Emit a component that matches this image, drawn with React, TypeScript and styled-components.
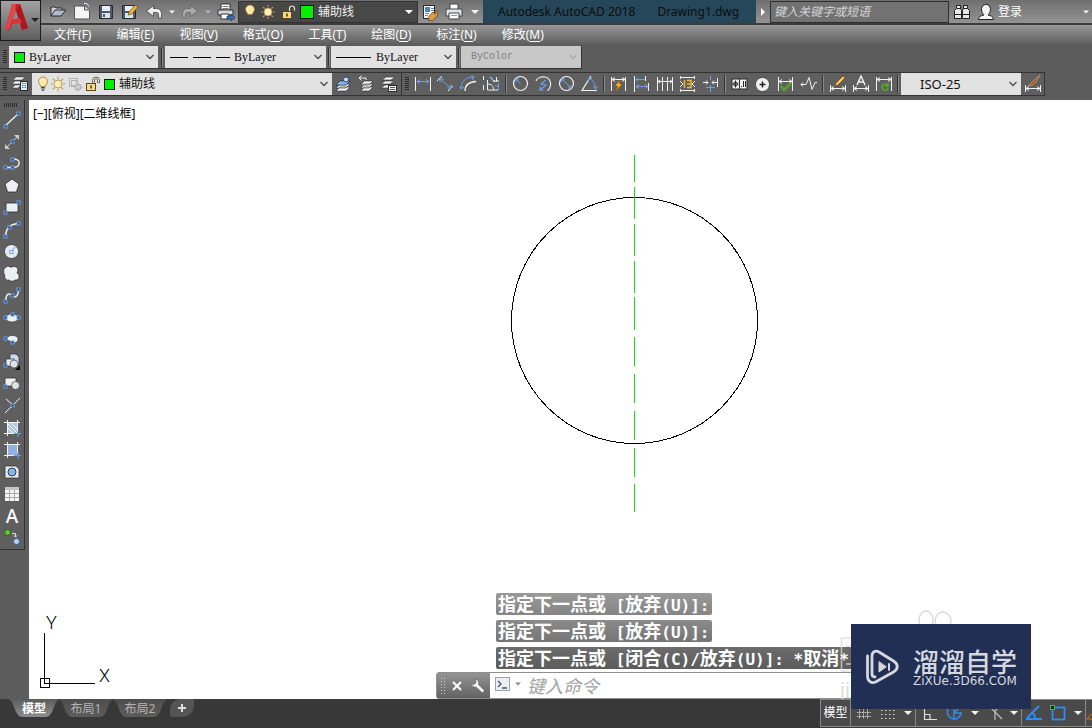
import React from "react";
import styled, { createGlobalStyle } from "styled-components";

const GlobalStyle = createGlobalStyle`
  *, *::before, *::after { box-sizing: border-box; }
  body { margin: 0; background: #5c5c5c; }
  button, input, select { font: inherit; color: inherit; margin: 0; padding: 0; border: 0; background: none; }
  svg { display: block; flex: none; }
`;

const W = "#f2f2f2";
const B = "#6aa2ee";
const K = "#2b2b2b";

/* ---------- shared glyphs ---------- */

const Bulb = () => (
  <svg width="12" height="16" viewBox="0 0 12 16">
    <path d="M6 1a4.5 4.5 0 0 0-4.5 4.5c0 2 1.8 3 2.2 5h4.6c.4-2 2.2-3 2.2-5A4.500 4.500 0 0 0 6 1z" fill="#ffe9a3" stroke="#8a6d2c" strokeWidth=".7" />
    <path d="M4.500 3.500a2.500 2.500 0 0 0-1 2.500" stroke="#fff" fill="none" />
    <path d="M4 11.500h4M4 13h4M5 14.500h2" stroke="#57534a" />
  </svg>
);

const Sun = () => (
  <svg width="16" height="16" viewBox="0 0 16 16">
    <path d="M8 1v2M8 13v2M1 8h2M13 8h2M3 3l1.500 1.500M11.500 11.500L13 13M13 3l-1.500 1.500M4.500 11.500L3 13" stroke="#b89c5c" strokeWidth="1.200" />
    <circle cx="8" cy="8" r="4" fill="#fff0b8" stroke="#a88a48" strokeWidth=".8" />
  </svg>
);

const FreezeViewport = () => (
  <svg width="16" height="16" viewBox="0 0 16 16" fill="none" stroke="#b4b4b4">
    <path d="M2 2.500h8.500M2.500 2v8.500h5M10.500 2v4" />
    <rect x="4.500" y="4.500" width="5" height="5" />
    <circle cx="11" cy="11" r="2.800" strokeWidth="1.500" fill="#d0d0d0" />
    <path d="M11 6.500v9M6.500 11h9" strokeDasharray="1 7" strokeWidth="1.500" />
  </svg>
);

const OpenLock = () => (
  <svg width="16" height="16" viewBox="0 0 16 16">
    <path d="M9.500 8V4.500a2.500 2.500 0 0 1 5 0V7" fill="none" stroke="#4a4436" strokeWidth="2.600" />
    <path d="M9.500 8V4.500a2.500 2.500 0 0 1 5 0V6.500" fill="none" stroke="#e8e3d6" strokeWidth="1.200" />
    <rect x="2.500" y="7.500" width="9" height="7" fill="#f6d98a" stroke="#57451c" />
    <path d="M7 9.500v3" stroke="#3d3215" strokeWidth="1.500" />
  </svg>
);

const Caret = ({ fill = W, w = 8 }: { fill?: string; w?: number }) => (
  <svg width={w} height="6" viewBox="0 0 8 6"><path d="M0 1h8L4 5z" fill={fill} /></svg>
);

const ChevronMark = styled.svg<{ $faint?: boolean }>`
  margin-left: -12px;
  margin-right: 4px;
  pointer-events: none;
  fill: none;
  stroke: ${(p) => (p.$faint ? "#a8a8a8" : "#4a4a4a")};
`;

const Chevron = ({ faint }: { faint?: boolean }) => (
  <ChevronMark $faint={faint} width="8" height="6" viewBox="0 0 8 6"><path d="M.5 1l3.500 3.500L7.500 1" strokeWidth="1.300" /></ChevronMark>
);

/* ---------- toolbar icons ---------- */

const ends = (x: number, y: number) => (
  <rect key={`${x}-${y}`} x={x - 1.5} y={y - 1.5} width="3" height="3" fill="#34435c" stroke={B} />
);

const dimTicks = <path d="M4.500 12v7M19.500 12v7M5 15.500h14M8 13.500l-3 2 3 2M16 13.500l3 2-3 2" stroke={W} fill="none" />;

const layerStack = (
  <path d="M8 4h9l-4 3H4zM7 8h9l-4 3H3zM7 12h9l-4 3H3z" fill={W} stroke={K} strokeWidth=".6" />
);

const icons: Record<string, React.ReactNode> = {
  /* quick access bar, 24 x 22 */
  open: (<>
    <path d="M5 15V6h4l1 1h6v2" fill="#cfd3d8" stroke={K} />
    <path d="M5 15l4-6h11l-5 6z" fill="#aebccb" stroke={K} />
  </>),
  newFile: (<>
    <path d="M4.500 5h10l5 4v9h-15z" fill="#f4f4f4" stroke="#555" />
    <path d="M14.500 5v4h5" fill="#d0d0d0" stroke="#555" />
    <path d="M14 2.500h3l2 3" fill="none" stroke="#dfe9f6" />
  </>),
  save: (<>
    <path d="M5.500 4.500h13v13h-13z" fill="#4b5a6c" stroke={K} />
    <rect x="8" y="5" width="8" height="5" fill="#e8eef4" />
    <rect x="8" y="12" width="8" height="5" fill="#dde4ec" />
    <path d="M10 13v3" stroke={K} strokeWidth="1.500" />
  </>),
  saveAs: (<>
    <path d="M4.500 4.500h13v13h-13z" fill="#4b5a6c" stroke={K} />
    <rect x="7" y="5" width="8" height="5" fill="#e8eef4" />
    <rect x="7" y="12" width="8" height="5" fill="#dde4ec" />
    <path d="M10 14l1-3 6-7 3 2-6 7z" fill="#f0b23a" stroke="#6b4a13" strokeWidth=".7" />
  </>),
  undo: <path d="M4.500 10l7-5.500v3h3c3 0 5 2 5 5V17h-3v-3c0-2-1-2.500-2-2.500h-3v4z" fill="#eee" stroke="#444" strokeWidth=".8" />,
  redo: <path d="M19.500 10l-7-5.500v3h-3c-3 0-5 2-5 5V17h3v-3c0-2 1-2.500 2-2.500h3v4z" fill="#a9a9a9" stroke="#666" strokeWidth=".8" />,
  plot: (<>
    <path d="M7 3h9v6H7z" fill="#fff" stroke="#333" />
    <path d="M8.500 5.500h6M8.500 7.500h6" stroke="#777" />
    <path d="M4 9h15v5H4z" fill="#d4d8dc" stroke="#333" />
    <path d="M7 13h8v5H7z" fill="#fff" stroke="#333" />
    <path d="M13 15h4v-2l4 3.500-4 3.500v-2h-4z" fill="#3d6fb5" stroke="#18304f" strokeWidth=".7" />
  </>),
  preview: (<>
    <rect x="5.500" y="4.500" width="11" height="13" fill="#f4f6f8" stroke={K} />
    <rect x="7" y="6" width="5" height="5" fill="#4a83c8" />
    <path d="M13 7.500h3M13 9.500h3M7 12.500h4M7 14.500h3" stroke="#7888a0" />
    <path d="M11 15l4-4 2 2 2-4 1 1-1 5-4 5-5-1z" fill="#dd9a48" stroke="#69401a" strokeWidth=".7" />
  </>),
  printer: (<>
    <path d="M8 3h8v6H8z" fill="#fff" stroke="#444" />
    <path d="M4 8h16v7H4z" fill="#e2e5e8" stroke="#444" />
    <path d="M7 12h10v6H7z" fill="#fff" stroke="#444" />
    <path d="M9 14.500h6" stroke="#6a9add" />
  </>),
  /* layers and dimension bars, 23 x 22 */
  layerProps: (<>
    <path d="M7 4h9l-3 3H4zM6 8h9l-3 3H3zM6 12h6l-3 3H3z" fill={W} stroke={K} strokeWidth=".5" />
    <rect x="11.500" y="8.500" width="7" height="9" fill="#dfe8f5" stroke={K} />
    <path d="M13 10.500h4M13 12.500h4M13 14.500h4" stroke="#4477bb" strokeDasharray="1 .5" />
  </>),
  layerCurrent: (<>
    <path d="M8 8h10l-4 4H4zM8 11h10l-4 4H4zM8 14h10l-4 4H4z" fill={W} stroke={K} strokeWidth=".6" />
    <path d="M8 8h10l-4 4H4z" fill="#84b4ee" stroke={K} strokeWidth=".6" />
    <circle cx="14" cy="6.500" r="2.500" fill="#cfe3ff" stroke="#244a80" />
  </>),
  layerPrev: (<>
    <path d="M4 5h7M6.500 2.500L4 5l2.500 2.500M11 5v2" fill="none" stroke={W} />
    <path d="M9 8h9l-4 4H6zM9 11h9l-4 4H6zM9 14h9l-4 4H6z" fill={W} stroke={K} strokeWidth=".6" />
  </>),
  layerState: (<>
    {layerStack}
    <rect x="10.500" y="12.500" width="8" height="6" fill={W} stroke={K} />
    <path d="M12 14.500h5M12 16.500h5" stroke="#555" />
  </>),
  dimLinear: (<>
    <path d="M4.500 4v14M19.500 4v14" stroke={W} />
    <path d="M6 8.500h12M9 6.500l-3 2 3 2M15 6.500l3 2-3 2" stroke={B} fill="none" />
  </>),
  dimAligned: (<>
    <path d="M3 8l5-5M14 18l5-5" stroke={W} />
    <path d="M6 6l11 9M6 9.500V6h4M17 11.500V15h-4" stroke={B} fill="none" />
  </>),
  dimArc: (<>
    <path d="M8 18C8 12 12 9 19 8.500" stroke={W} fill="none" strokeWidth="1.300" />
    <path d="M4 16C4 8 9 4 17 4M3 13l1 3 3-2M14 2.500L17 4l-2 3" stroke={B} fill="none" />
  </>),
  dimOrdinate: (<>
    <path d="M7.500 7v10H18M7.500 11c4 0 6 2 6 6M13 8h6" stroke={W} fill="none" />
    <path d="M3.500 3v4M3.500 12v5M16.500 4v5M11 5l4 4" stroke={W} />
    <path d="M9 4.500h3v3M15 13h4M18.500 10v7" stroke={B} fill="none" />
  </>),
  dimRadius: (<>
    <circle cx="11.500" cy="10.500" r="7" fill="none" stroke={W} strokeWidth="1.200" />
    <path d="M11.500 10.500L7 6M7 9V6h3" stroke={B} fill="none" />
  </>),
  dimJogged: (<>
    <path d="M4 8c1-3 5-4.500 9-4s6 4.500 5.500 8.500-2 4-3 5" fill="none" stroke={W} strokeWidth="1.200" />
    <path d="M14 7l-5 4 5 1-6 5M8 13.500V17h3.500" stroke={B} fill="none" strokeWidth="1.200" />
  </>),
  dimDiameter: (<>
    <circle cx="11.500" cy="10.500" r="7" fill="none" stroke={W} strokeWidth="1.200" />
    <path d="M7 6l9 9M7 9V6h3M16 12v3h-3" stroke={B} fill="none" />
  </>),
  dimAngular: (<>
    <path d="M13 3L4 17.500h15" stroke={W} fill="none" strokeWidth="1.200" />
    <path d="M11 5.500c4 1.500 6.500 5 6.500 10M10.500 9V5.500H14M15 13l2.500 3 2.500-3" stroke={B} fill="none" />
  </>),
  dimQuick: (<>
    <path d="M4.500 4v14M18.500 4v14M5 6.500h13M8 4.500l-3 2 3 2M15 4.500l3 2-3 2" stroke={W} fill="none" />
    <path d="M13 7l-5 6h3l-2 5 6-7h-3z" fill="#ffb52e" stroke="#a35c00" strokeWidth=".5" />
  </>),
  dimBaseline: (<>
    <path d="M4.500 3v16M18.500 10v8M15.500 3v5" stroke={W} />
    <path d="M6 6.500h9M8 4.500l-2 2 2 2M6 13.500h12M9 11.500l-3 2 3 2M15 11.500l3 2-3 2" stroke={B} fill="none" />
  </>),
  dimContinue: (
    <path d="M4.500 4v14M9.500 4v14M14.500 4v14M19.500 4v14M5 8.500h14M7 7l-2 1.500L7 10M17 7l2 1.500-2 1.500" stroke={W} fill="none" />
  ),
  dimSpace: (<>
    <path d="M4 4.500h15M4 17.500h15M4.500 3v3M18.500 3v3M4.500 16v3M18.500 16v3M4 8l3 3-3 3M19 8l-3 3 3 3" stroke={W} fill="none" />
    <path d="M11 7.500h4v7h-4M11 11h4M8.500 7v8" stroke="#f5b731" fill="none" strokeWidth="1.500" />
  </>),
  dimBreak: (<>
    <path d="M4 9.500h5M13 9.500h6M18.500 5v9M7 7.500l2 2-2 2M15 7.500l-2 2 2 2" stroke={W} fill="none" />
    <path d="M11.500 3v4M11.500 12v7M7 14.500h9" stroke={B} />
  </>),
  tolerance: (<>
    <rect x="4" y="6" width="15" height="10" fill={W} stroke={K} />
    <path d="M11.500 6v10M15.500 8v6M17.500 8v6M13 13.500h1" stroke={K} fill="none" />
    <circle cx="7.500" cy="11" r="2" fill="none" stroke={K} />
    <path d="M7.500 7.500v7M4.500 11h6" stroke={K} />
  </>),
  centerMark: (<>
    <circle cx="11.500" cy="11.500" r="7" fill={W} stroke={K} strokeWidth=".7" />
    <path d="M11.500 8.500v6M8.500 11.500h6" stroke="#222" strokeWidth="1.500" />
  </>),
  inspect: (<>
    <path d="M4.500 4v14M18.500 4v14M5 8.500h13M8 6.500l-3 2 3 2M15 6.500l3 2-3 2" stroke={W} fill="none" />
    <path d="M7 13l3 4 7-7" stroke="#57a329" strokeWidth="2.500" fill="none" />
  </>),
  jogLine: <path d="M4 11.500h5l3-7 3 12 3-7h2M6 9.500l-2 2 2 2" stroke={W} fill="none" />,
  dimEdit: (<>
    {dimTicks}
    <path d="M9 13l1-3 7-7 2 2-7 7z" fill="#ffc655" stroke="#6f4712" strokeWidth=".7" />
  </>),
  dimTextEdit: (<>
    {dimTicks}
    <path d="M8 12l4-9 4 9M9.500 9h5" stroke={W} fill="none" strokeWidth="1.500" />
  </>),
  dimUpdate: (<>
    <path d="M4.500 4v14M19.500 4v14M5 6.500h14M8 4.500l-3 2 3 2M16 4.500l3 2-3 2" stroke={W} fill="none" />
    <path d="M15 12a3 3 0 1 0 1 3M16 10v3h-3" stroke="#57a329" strokeWidth="1.800" fill="none" />
  </>),
  dimStyle: (<>
    {dimTicks}
    <path d="M7 13l5-5 7-6-4 7-3 3z" fill="#a65c2c" stroke="#e0a877" strokeWidth=".6" />
  </>),
  /* draw bar, 24 x 22 */
  line: <><path d="M5 17L18 5" stroke={W} strokeWidth="1.300" />{ends(5.5, 17.500)}{ends(18.500, 4.500)}</>,
  xline: (<>
    <path d="M6 17L18 5" stroke="#ccc" />
    <path d="M5 18v-5l5 5zM19 4v5l-5-5z" fill="#ccc" />
    {ends(12.500, 10.500)}
  </>),
  pline: <><path d="M5 14.500h8c8 0 8-8.500 1-8.500" stroke={W} fill="none" strokeWidth="1.400" />{ends(5.500, 14.500)}{ends(12.500, 14.500)}{ends(12.500, 6.500)}</>,
  polygon: <path d="M12 4l7 5-2.500 8h-9L5 9z" fill="#eceff3" stroke={K} strokeWidth=".8" />,
  rectangle: <><rect x="6" y="6" width="12" height="9" fill="#eceff3" stroke={K} strokeWidth=".8" />{ends(5.500, 15.500)}{ends(18.500, 5.500)}</>,
  arc: <><path d="M5.500 17C6 9 11 5 18 4.500" stroke={W} fill="none" strokeWidth="1.400" />{ends(5.500, 17.500)}{ends(9.500, 8.500)}{ends(18.500, 4.500)}</>,
  circle: <><circle cx="11.500" cy="10.500" r="7" fill="#e4ebf2" stroke={K} strokeWidth=".7" /><path d="M11 11l4-5" stroke={B} /><rect x="10" y="9.500" width="3" height="3" fill="#fff" stroke={B} /></>,
  revcloud: <path d="M6 4c2-1.500 4-.500 5 .500 2-2 7-1 7 2.500 0 1-1 2-1 3 3 1 3 8-2 7-2 2-5 1-6 0-3 1-5-2-4-5-2-2-2-6 1-8z" fill="#eceff3" stroke={K} strokeWidth=".7" />,
  spline: <><path d="M5.500 17C6 8 9 8 12 10.500S18 12 18.500 5" stroke={W} fill="none" strokeWidth="1.500" />{ends(5.500, 16.500)}{ends(12.500, 10.500)}{ends(18.500, 4.500)}</>,
  ellipse: <><ellipse cx="12" cy="11" rx="6.500" ry="4" fill="#eceff3" stroke={K} strokeWidth=".6" />{ends(5.500, 10.500)}{ends(12.500, 7.500)}{ends(18.500, 10.500)}</>,
  ellipseArc: <><path d="M7 9c2-4 11-3 11 1s-4 4-7 4l-1-2c-2 0-3-1-3-3z" fill="#eceff3" stroke={K} strokeWidth=".6" />{ends(5.500, 9.500)}{ends(12.500, 13.500)}</>,
  insertBlock: (<>
    <path d="M10 3h6l3 3v7h-9z" fill="#c7dcf3" stroke={K} strokeWidth=".7" />
    <rect x="6" y="8" width="8" height="7" fill="#eee" stroke={K} strokeWidth=".7" />
    <circle cx="14" cy="13" r="4" fill="#dce2e8" stroke={K} strokeWidth=".6" />
    {ends(5.500, 14.500)}
    <path d="M20 14v5h-5z" fill="#000" />
  </>),
  makeBlock: (<>
    <rect x="5" y="5" width="11" height="8" fill="#eee" stroke={K} strokeWidth=".7" />
    <circle cx="15.500" cy="12.500" r="4" fill="#dce2e8" stroke={K} strokeWidth=".6" />
    {ends(5.500, 13.500)}
  </>),
  point: <><path d="M5 18L20 3M6 4l7 6" stroke={W} />{ends(12.500, 10.500)}</>,
  hatch: (<>
    <path d="M7.500 3v16M17.500 3v12M4 5.500h16M4 16.500h12" stroke={W} />
    <rect x="8" y="6" width="9" height="10" fill="#a9c8ef" />
    <path d="M8 7l9 9M11 6l6 6M8 11l5 5" stroke="#fff" />
    <path d="M18 13v7M14 16.500h7" stroke={B} />
  </>),
  gradient: (<>
    <path d="M7.500 3v16M17.500 3v12M4 5.500h16M4 16.500h12" stroke={W} />
    <rect x="8" y="6" width="9" height="10" fill="#8fb2de" />
    <path d="M18 13v7M14 16.500h7" stroke={B} />
  </>),
  region: (<>
    <path d="M5 5h11l3 3v9H5z" fill="#e9e9e9" stroke={K} strokeWidth=".7" />
    <circle cx="12" cy="11" r="4" fill="#8db3e3" stroke="#25446f" />
  </>),
  table: (<>
    <rect x="5" y="4" width="14" height="14" fill="#f4f4f4" />
    <rect x="5" y="4" width="14" height="3" fill="#c4c4c4" />
    <path d="M9.500 7v11M14.500 7v11M5 10.500h14M5 14.500h14" stroke="#aaa" />
  </>),
  addSelected: (<>
    <circle cx="7.500" cy="5.500" r="3" fill="#67c13a" stroke="#29611a" />
    <circle cx="16.500" cy="14.500" r="3" fill="#b7d3f5" stroke="#3b67a5" />
    <path d="M12 6.500h3.500V10M14 8.500l1.500 1.500L17 8.500" stroke="#ddd" fill="none" />
  </>),
  /* status bar, 24 x 22 */
  grid: <path d="M7.500 4v13M11.500 4v13M15.500 4v13M5 6.500h14M5 10.500h14M5 14.500h14" stroke="#d8d8d8" strokeDasharray="1 .6" />,
  snap: <path d="M5 4.500h14M5 8.500h14M5 12.500h14M5 16.500h14" stroke="#d8d8d8" strokeDasharray="1.500 2.500" strokeWidth="1.200" />,
  ortho: <path d="M6.500 4v13.500H19M7 12.500h5V17" stroke="#ddd" fill="none" strokeWidth="1.200" />,
  polar: <path d="M18 6a7 7 0 1 0 1 6M12 3v8h8M12 17v-6l5-5" stroke="#2f8df5" fill="none" strokeWidth="1.500" />,
  iso: <path d="M12 18V9M6 4l13 13M17 4l-5 5" stroke="#bbb" fill="none" strokeWidth="1.300" />,
  tracking: <path d="M4 17h16M5 16L17 4M9 11c3 0 4 3 4 6" stroke="#2f8df5" fill="none" strokeWidth="1.800" />,
  osnap: <><rect x="6.500" y="5.500" width="12" height="12" fill="none" stroke="#2f8df5" strokeWidth="1.800" /><rect x="4.500" y="3.500" width="4" height="4" fill="#0b2a0b" stroke="#19d219" /></>,
  lineweight: <path d="M1 17l4-5M1 17h5" stroke="#c77a2c" fill="none" />,
};

/* ---------- header ---------- */

const Shell = styled.div`
  display: flex;
  flex-direction: column;
  min-height: 100vh;
  min-width: 0;
  overflow: hidden;
  background: #5c5c5c;
  font-family: "Noto Sans", "Noto Sans CJK SC", sans-serif;
  font-size: 12px;
  line-height: 18px;
  color: #f2f2f2;
`;

const Header = styled.header`
  display: flex;
  height: 45px;
  background: #5c5c5c;
`;

const LogoButton = styled.button`
  width: 41px;
  height: 41px;
  flex: none;
  border: 1px solid #1c1c1c;
  background: linear-gradient(#a3a3a3, #5d5d5d);
`;

const HeaderRows = styled.div`
  flex: 1;
  min-width: 0;
`;

const TitleBar = styled.div`
  display: flex;
  align-items: center;
  height: 25px;
  border-bottom: 2px solid #3c3c3c;
  background: linear-gradient(#6f6f6f, #939393);
`;

const QuickAccess = styled.div`
  display: flex;
  align-items: center;
  padding-left: 5px;
`;

const IconButton = styled.button<{ $w: number }>`
  display: flex;
  align-items: center;
  justify-content: center;
  flex: none;
  width: ${(p) => p.$w}px;
  height: 22px;
`;

const Tool = ({ name, label, w = 24 }: { name: string; label: string; w?: number }) => (
  <IconButton $w={w} aria-label={label}>
    <svg width={w} height="22" viewBox={`0 0 ${w} 22`}>{icons[name]}</svg>
  </IconButton>
);

const Combo = styled.div<{ $w: number; $dark?: boolean; $off?: boolean; $pad?: number }>`
  display: flex;
  align-items: center;
  gap: 4px;
  flex: 0 0 auto;
  width: ${(p) => p.$w}px;
  height: 22px;
  padding-left: ${(p) => p.$pad ?? 5}px;
  color: ${(p) => (p.$dark ? "#f2f2f2" : p.$off ? "#808080" : "#111")};
  background: ${(p) => (p.$dark ? "#484848" : p.$off ? "#c8c8c8" : "#e2e2e2")};
  border: ${(p) => (p.$dark ? "1px solid #333" : "0")};
`;

const LayerFlags = styled.span<{ $gap: number }>`
  display: flex;
  align-items: center;
  gap: ${(p) => p.$gap}px;
`;

const Select = styled.select<{ $face?: "serif" | "mono" | "large" }>`
  appearance: none;
  flex: 1;
  min-width: 0;
  height: 20px;
  outline: 0;
  opacity: 1;
  font-family: ${(p) =>
    p.$face === "serif" ? '"Liberation Serif", serif' : p.$face === "mono" ? '"Liberation Mono", monospace' : "inherit"};
  font-size: ${(p) => (p.$face === "mono" ? 10 : p.$face === "large" ? 13 : 12)}px;
`;

const Swatch = styled.span<{ $size: number }>`
  flex: none;
  width: ${(p) => p.$size}px;
  height: ${(p) => p.$size}px;
  border: 1px solid #111;
  background: #00f000;
`;

const TitleText = styled.h1`
  display: flex;
  align-items: center;
  gap: 22px;
  width: 273px;
  height: 23px;
  margin: 0;
  padding-left: 15px;
  overflow: hidden;
  white-space: nowrap;
  font-size: 12px;
  font-weight: 400;
  color: #0a0d0f;
  background: #26475a;
`;

const SearchInput = styled.input`
  width: 179px;
  height: 22px;
  padding-left: 3px;
  border: 1px solid #2e2e2e;
  background: #727272;
  outline: 0;
  &::placeholder { color: #d6d6d6; font-style: italic; opacity: 1; }
`;

const AccountButton = styled.button`
  height: 22px;
  margin-left: 1px;
  color: #fff;
`;

const Spacer = styled.span`
  flex: 1;
`;

const MenuBar = styled.nav`
  display: flex;
  align-items: center;
  gap: 25px;
  height: 20px;
  padding-left: 13px;
  overflow: hidden;
  background: linear-gradient(#989898, #5c5c5c);
`;

const MenuButton = styled.button`
  flex: none;
  white-space: nowrap;
  color: #fff;
  & u { text-underline-offset: 2px; }
`;

/* ---------- toolbars ---------- */

const ToolbarRow = styled.div<{ $gap?: boolean }>`
  display: flex;
  height: 24px;
  margin-bottom: ${(p) => (p.$gap ? 3 : 4)}px;
`;

const Toolbar = styled.div<{ $open?: boolean }>`
  display: flex;
  align-items: center;
  flex: none;
  height: 24px;
  border-top: 1px solid ${(p) => (p.$open ? "#5c5c5c" : "#333")};
  border-bottom: 1px solid #333;
  border-right: 1px solid #333;
  background: #5f5f5f;
`;

const Grip = styled.span`
  flex: none;
  width: 4px;
  height: 14px;
  margin: 0 2px 0 3px;
  background: repeating-linear-gradient(#2c2c2c 0 1px, transparent 1px 2px);
`;

const Divider = styled.span<{ $w: number }>`
  flex: none;
  display: flex;
  justify-content: center;
  width: ${(p) => p.$w}px;
  height: 18px;
  &::before { content: ""; width: 2px; border-left: 1px solid #333; border-right: 1px solid #8a8a8a; }
`;

const layerList = (<>
  <option>辅助线</option>
  <option>0</option>
</>);

const dimGroups: [string, string][][] = [
  [["dimLinear", "线性"], ["dimAligned", "对齐"], ["dimArc", "弧长"], ["dimOrdinate", "坐标"]],
  [["dimRadius", "半径"], ["dimJogged", "折弯"], ["dimDiameter", "直径"], ["dimAngular", "角度"]],
  [["dimQuick", "快速标注"], ["dimBaseline", "基线"], ["dimContinue", "连续"], ["dimSpace", "等距标注"], ["dimBreak", "折断标注"]],
  [["tolerance", "公差"], ["centerMark", "圆心标记"], ["inspect", "检验"], ["jogLine", "折弯线性"]],
  [["dimEdit", "编辑标注"], ["dimTextEdit", "编辑标注文字"], ["dimUpdate", "标注更新"]],
];

const menus: [string, string][] = [
  ["文件", "F"], ["编辑", "E"], ["视图", "V"], ["格式", "O"], ["工具", "T"], ["绘图", "D"], ["标注", "N"], ["修改", "M"],
];

const drawTools: [string, string][] = [
  ["line", "直线"], ["xline", "构造线"], ["pline", "多段线"], ["polygon", "多边形"], ["rectangle", "矩形"],
  ["arc", "圆弧"], ["circle", "圆"], ["revcloud", "修订云线"], ["spline", "样条曲线"], ["ellipse", "椭圆"],
  ["ellipseArc", "椭圆弧"], ["insertBlock", "插入块"], ["makeBlock", "创建块"], ["point", "点"], ["hatch", "图案填充"],
  ["gradient", "渐变色"], ["region", "面域"], ["table", "表格"], ["text", "多行文字"], ["addSelected", "添加选定对象"],
];

/* ---------- work area ---------- */

const WorkArea = styled.main`
  display: flex;
  flex: 1;
  min-height: 0;
`;

const Side = styled.aside`
  flex: none;
  width: 29px;
`;

const DrawBar = styled.div`
  display: flex;
  flex-direction: column;
  width: 25px;
  border-right: 1px solid #333;
  border-bottom: 1px solid #333;
  background: #5f5f5f;
`;

const SideGrip = styled.span`
  width: 14px;
  height: 4px;
  margin: 3px 0 2px 4px;
  background: repeating-linear-gradient(90deg, #2c2c2c 0 1px, transparent 1px 2px);
`;

const TextTool = styled.button`
  width: 24px;
  height: 22px;
  font-size: 19px;
  line-height: 22px;
  font-weight: 500;
  color: #fff;
`;

const Canvas = styled.section`
  position: relative;
  flex: 1;
  min-width: 0;
  min-height: 599px;
  overflow: hidden;
  color: #000;
  background: #fff;
`;

const ViewControls = styled.button`
  position: relative;
  z-index: 1;
  display: block;
  margin: 5px 0 0 4px;
  color: #000;
`;

const Drawing = styled.svg`
  position: absolute;
  top: 0;
  left: 0;
`;

const UcsIcon = styled.svg`
  position: absolute;
  left: 0;
  bottom: 0;
  font: 300 18px Roboto, sans-serif;
`;

const CommandPanel = styled.div`
  position: absolute;
  left: 407px;
  bottom: 0;
  display: flex;
  flex-direction: column;
  align-items: stretch;
  width: 480px;
`;

const History = styled.div`
  display: flex;
  flex-direction: column;
  align-items: flex-start;
  gap: 5px;
  padding: 0 0 3px 60px;
`;

const HistoryLine = styled.div<{ $top: string; $bottom: string }>`
  height: 22px;
  padding: 0 3px 0 2px;
  border-radius: 2px;
  font: 700 18px/20px "Noto Sans CJK SC", sans-serif;
  white-space: pre;
  color: #fff;
  background: linear-gradient(${(p) => p.$top}, ${(p) => p.$bottom});
`;

const Mono = styled.span`
  font: 700 16px/20px "DejaVu Sans Mono", monospace;
`;

const Message = ({ text }: { text: string }) => (
  <>{text.split(/([\x20-\x7e]+)/).map((part, i) => (i % 2 ? <Mono key={i}>{part}</Mono> : part))}</>
);

const CommandBar = styled.div`
  display: flex;
  height: 27px;
  border: 1px solid #8e8e8e;
  border-radius: 3px 0 0 3px;
  background: #fff;
`;

const CommandHandle = styled.div`
  display: flex;
  align-items: center;
  width: 53px;
  background: linear-gradient(#949494, #636363);
`;

const DotGrip = styled.span`
  width: 6px;
  height: 18px;
  margin: 0 2px 0 3px;
  background: radial-gradient(circle, #d0d0d0 1px, transparent 1px) 0 0 / 3px 3px;
`;

const CommandInput = styled.input`
  flex: 1;
  min-width: 0;
  padding-left: 5px;
  outline: 0;
  font-size: 18px;
  color: #333;
  &::placeholder { color: #a4a4a4; font-style: italic; opacity: 1; }
`;

/* ---------- watermark ---------- */

const Ghost = styled.svg`
  position: absolute;
  right: 60px;
  bottom: 0;
  z-index: 1;
  font: 22px "Liberation Sans", sans-serif;
`;

const Brand = styled.div`
  position: absolute;
  right: 61px;
  bottom: 19px;
  z-index: 2;
  display: flex;
  align-items: center;
  gap: 12px;
  width: 180px;
  height: 85px;
  padding-left: 14px;
  color: #d6d8df;
  background: #222f54;
`;

const BrandName = styled.div`
  font: 500 26px/28px "Noto Sans CJK SC", sans-serif;
  white-space: nowrap;
`;

const BrandSite = styled.div`
  font: 12px/12px "DejaVu Sans", sans-serif;
  white-space: nowrap;
`;

/* ---------- status bar ---------- */

const StatusWrap = styled.div`
  position: relative;
`;

const StatusBar = styled.footer`
  display: flex;
  height: 29px;
  background: #383838;
`;

const Tabs = styled.div`
  display: flex;
  padding-left: 9px;
`;

const LayoutTab = styled.button<{ $active?: boolean; $w: number }>`
  width: ${(p) => p.$w}px;
  height: 18px;
  line-height: 17px;
  color: ${(p) => (p.$active ? "#fff" : "#b4b4b4")};
  font-weight: ${(p) => (p.$active ? 700 : 400)};
  background: ${(p) => (p.$active ? "linear-gradient(#5c5c5c, #8c8c8c)" : "linear-gradient(#4e4e4e, #5c5c5c)")};
  clip-path: polygon(0 0, 100% 0, calc(100% - 3px) 3px, calc(100% - 7px) 13px, calc(100% - 10px) 17px, calc(100% - 13px) 100%, 13px 100%, 10px 17px, 7px 13px, 3px 3px);
`;

const PlusTab = styled.button`
  display: flex;
  align-items: center;
  justify-content: center;
  width: 24px;
  height: 18px;
  margin-left: 3px;
  border-radius: 10px 0 12px 2px;
  background: #555;
`;

const StatusTools = styled.div`
  display: flex;
  align-items: center;
  height: 28px;
  border: 1px solid #8a8a8a;
  border-right: 0;
  background: #4a4a4a;
`;

const ModelButton = styled.button`
  width: 29px;
  color: #fff;
`;

const StatusDivider = styled.span<{ $w: number }>`
  flex: none;
  width: ${(p) => p.$w}px;
  height: 26px;
  border-left: 1px solid #8a8a8a;
`;

const CaretButton = ({ w, label, fill }: { w: number; label: string; fill?: string }) => (
  <IconButton $w={w} aria-label={label}><Caret fill={fill} w={w > 12 ? 8 : 6} /></IconButton>
);

export default function App() {
  return (
    <Shell>
      <GlobalStyle />
      <Header>
        <LogoButton aria-label="应用程序菜单">
          <svg width="39" height="39" viewBox="0 0 39 39">
            <path d="M11 3h8l8 24-6 2-2-7-8 1-2 6H4z" fill="#c9222b" />
            <path d="M11 3h4l-1 8-4 12-2 5-4 1z" fill="#e0474d" />
            <path d="M15 9l-3.500 10 6-1.500z" fill="#8c8c8c" />
            <path d="M19 3l8 24-6 2-6-20z" fill="#ab1620" />
            <path d="M10 19l9-2 2 5-10 1z" fill="#d8343c" />
            <path d="M30 17h8l-4 4z" fill="#222" />
          </svg>
        </LogoButton>
        <HeaderRows>
          <TitleBar>
            <QuickAccess>
              <Tool name="open" label="打开" />
              <Tool name="newFile" label="新建" />
              <Tool name="save" label="保存" />
              <Tool name="saveAs" label="另存为" />
              <Tool name="undo" label="放弃" />
              <CaretButton w={12} label="放弃列表" />
              <Tool name="redo" label="重做" />
              <CaretButton w={12} label="重做列表" fill="#bbb" />
              <Tool name="plot" label="打印" />
            </QuickAccess>
            <Combo $w={180} $dark>
              <LayerFlags $gap={4}><Bulb /><Sun /><OpenLock /></LayerFlags>
              <Swatch $size={14} />
              <Select aria-label="图层">{layerList}</Select>
              <ChevronMark width="8" height="6" viewBox="0 0 8 6"><path d="M0 1h8L4 5z" fill="#fff" stroke="none" /></ChevronMark>
            </Combo>
            <Tool name="preview" label="特性匹配" />
            <Tool name="printer" label="打印预览" />
            <CaretButton w={17} label="自定义快速访问工具栏" />
            <TitleText><span>Autodesk AutoCAD 2018</span><span>Drawing1.dwg</span></TitleText>
            <IconButton $w={14} aria-label="展开搜索">
              <svg width="6" height="10" viewBox="0 0 6 10"><path d="M1 1l4 4-4 4z" fill="#fff" /></svg>
            </IconButton>
            <SearchInput aria-label="搜索" placeholder="键入关键字或短语" />
            <IconButton $w={25} aria-label="查找">
              <svg width="18" height="18" viewBox="0 0 18 18" fill="#e8e8e8" stroke="#222">
                <path d="M3.500 2.500h4v3l1 2v8h-7v-8l2-2zM10.500 2.500h4v3l2 2v8h-7v-8l1-2z" />
                <path d="M1.500 11.500h7M9.500 11.500h7M3.500 5.500h4M10.500 5.500h4" />
              </svg>
            </IconButton>
            <IconButton $w={23} aria-label="用户">
              <svg width="18" height="18" viewBox="0 0 18 18" fill="#f6f6f6" stroke="#222">
                <path d="M1.500 16.500c0-3 3-4 5.500-4.500C3 8.500 4 1.500 9 1.500S15 8.500 11 12c2.500.500 5.500 1.500 5.500 4.500z" />
              </svg>
            </IconButton>
            <AccountButton>登录</AccountButton>
            <Spacer />
            <CaretButton w={12} label="登录选项" />
          </TitleBar>
          <MenuBar aria-label="主菜单">
            {menus.map(([name, key]) => (
              <MenuButton key={key}>{name}(<u>{key}</u>)</MenuButton>
            ))}
          </MenuBar>
        </HeaderRows>
      </Header>

      <ToolbarRow $gap>
        <Toolbar $open>
          <Grip />
          <Combo $w={149}>
            <Swatch $size={11} />
            <Select $face="serif" aria-label="颜色"><option>ByLayer</option></Select>
            <Chevron />
          </Combo>
          <Divider $w={7} />
          <Combo $w={161}>
            <svg width="60" height="3" viewBox="0 0 60 3"><path d="M0 1.500h18M23 1.500h18M46 1.500h14" stroke="#000" /></svg>
            <Select $face="serif" aria-label="线型"><option>ByLayer</option></Select>
            <Chevron />
          </Combo>
          <Divider $w={5} />
          <Combo $w={125}>
            <svg width="36" height="3" viewBox="0 0 36 3"><path d="M0 1.500h35" stroke="#000" /></svg>
            <Select $face="serif" aria-label="线宽"><option>ByLayer</option></Select>
            <Chevron />
          </Combo>
          <Divider $w={5} />
          <Combo $w={120} $off $pad={10}>
            <Select $face="mono" aria-label="打印样式" disabled><option>ByColor</option></Select>
            <Chevron faint />
          </Combo>
        </Toolbar>
      </ToolbarRow>

      <ToolbarRow>
        <Toolbar>
          <Grip />
          <Tool name="layerProps" label="图层特性管理器" w={23} />
          <Combo $w={300}>
            <LayerFlags $gap={1}><Bulb /><Sun /><FreezeViewport /><OpenLock /></LayerFlags>
            <Swatch $size={11} />
            <Select aria-label="图层控制">{layerList}</Select>
            <Chevron />
          </Combo>
          <Tool name="layerCurrent" label="将对象的图层置为当前" w={23} />
          <Tool name="layerPrev" label="上一个图层" w={23} />
          <Tool name="layerState" label="图层状态管理器" w={23} />
        </Toolbar>
        <Toolbar>
          <Grip />
          {dimGroups.map((group, i) => (
            <React.Fragment key={i}>
              {group.map(([name, label]) => <Tool key={name} name={name} label={label} w={23} />)}
              <Divider $w={6} />
            </React.Fragment>
          ))}
          <Combo $w={120} $pad={19}>
            <Select $face="large" aria-label="标注样式控制"><option>ISO-25</option></Select>
            <Chevron />
          </Combo>
          <Tool name="dimStyle" label="标注样式" w={23} />
        </Toolbar>
      </ToolbarRow>

      <WorkArea>
        <Side>
          <DrawBar>
            <SideGrip />
            {drawTools.map(([name, label]) =>
              name === "text"
                ? <TextTool key={name} aria-label={label}>A</TextTool>
                : <Tool key={name} name={name} label={label} />
            )}
          </DrawBar>
        </Side>
        <Canvas>
          <ViewControls>[−][俯视][二维线框]</ViewControls>
          <Drawing width="1063" height="599" viewBox="0 0 1063 599" shapeRendering="crispEdges" fill="none">
            <circle cx="605.5" cy="220.5" r="123" stroke="#000" />
            <path d="M605.500 55V82M605.500 87V119M605.500 124V156M605.500 161V193M605.500 197V230M605.500 237V266M605.500 274V303M605.500 311V340M605.500 348V377M605.500 384V412" stroke="#1fd01f" />
          </Drawing>
          <UcsIcon width="100" height="100" viewBox="0 0 100 100">
            <path d="M15.500 34V84.500H66M11.500 79.500h9v9h-9z" fill="none" stroke="#000" shapeRendering="crispEdges" />
            <text x="17" y="30">Y</text>
            <text x="70" y="83">X</text>
          </UcsIcon>
          <CommandPanel>
            <History>
              <HistoryLine $top="#999" $bottom="#858585"><Message text="指定下一点或 [放弃(U)]:" /></HistoryLine>
              <HistoryLine $top="#8a8a8a" $bottom="#757575"><Message text="指定下一点或 [放弃(U)]:" /></HistoryLine>
              <HistoryLine $top="#6c6c6c" $bottom="#5c5c5c"><Message text="指定下一点或 [闭合(C)/放弃(U)]: *取消*" /></HistoryLine>
            </History>
            <CommandBar>
              <CommandHandle>
                <DotGrip />
                <IconButton $w={18} aria-label="关闭">
                  <svg width="10" height="10" viewBox="0 0 10 10"><path d="M1 1l8 8M9 1L1 9" stroke="#fff" strokeWidth="2" /></svg>
                </IconButton>
                <IconButton $w={24} aria-label="自定义">
                  <svg width="16" height="16" viewBox="0 0 16 16"><path d="M5.500 1a4 4 0 0 1 3 5.500l6 6-2 2.500-6.500-6A4 4 0 0 1 1 5l2.500 2L6 4.500z" fill="#f4f4f4" stroke="#555" strokeWidth=".6" /></svg>
                </IconButton>
              </CommandHandle>
              <IconButton $w={24} aria-label="最近使用的命令">
                <svg width="15" height="15" viewBox="0 0 15 15"><rect x=".5" y=".5" width="14" height="13" fill="#eceff3" stroke="#9aa3ad" /><path d="M3 4l3 3-3 3M7 11h5" fill="none" stroke="#4a5562" strokeWidth="1.300" /></svg>
              </IconButton>
              <CaretButton w={8} label="命令列表" fill="#888" />
              <CommandInput aria-label="命令" placeholder="键入命令" />
            </CommandBar>
          </CommandPanel>
          <Ghost width="192" height="90" viewBox="0 0 192 90" fill="none" stroke="#d9d9d9" strokeWidth="1.500">
            <ellipse cx="86" cy="11" rx="7" ry="9" /><ellipse cx="103" cy="12" rx="8" ry="9" />
            <path d="M14 29H1.500V62H14M6 37h8v18H6" opacity=".8" />
            <text x="0" y="89" fill="#dedede" stroke="none">ji</text>
          </Ghost>
        </Canvas>
      </WorkArea>

      <StatusWrap>
        <StatusBar>
          <Tabs>
            <LayoutTab $w={50} $active>模型</LayoutTab>
            <LayoutTab $w={54}>布局1</LayoutTab>
            <LayoutTab $w={54}>布局2</LayoutTab>
            <PlusTab aria-label="新建布局">
              <svg width="10" height="10" viewBox="0 0 10 10"><path d="M5 1v8M1 5h8" stroke="#ddd" strokeWidth="2" /></svg>
            </PlusTab>
          </Tabs>
          <Spacer />
          <StatusTools>
            <ModelButton>模型</ModelButton>
            <StatusDivider $w={2} />
            <Tool name="grid" label="栅格" />
            <Tool name="snap" label="捕捉" />
            <CaretButton w={15} label="捕捉设置" />
            <StatusDivider $w={3} />
            <Tool name="ortho" label="正交" />
            <Tool name="polar" label="极轴追踪" />
            <CaretButton w={17} label="极轴设置" />
            <Tool name="iso" label="等轴测草图" />
            <CaretButton w={14} label="等轴测设置" />
            <StatusDivider $w={1} />
            <Tool name="tracking" label="对象捕捉追踪" />
            <Tool name="osnap" label="对象捕捉" />
            <CaretButton w={15} label="对象捕捉设置" />
            <StatusDivider $w={1} />
            <Tool name="lineweight" label="线宽显示" w={6} />
          </StatusTools>
        </StatusBar>
        <Brand>
          <svg width="36" height="38" viewBox="0 0 36 38" fill="none" stroke="#d6d8df" strokeLinecap="round" strokeLinejoin="round">
            <path d="M2.500 8v20c0 5 4 8 8 6l18-10c5-3 5-8 0-11L14 4c-4-2-7 0-7 4v18c0 2 1 3 3 3" strokeWidth="2.800" />
            <path d="M14 14v10l7-5z" fill="#d6d8df" strokeWidth="1" />
            <path d="M24 16v6" strokeWidth="2" />
          </svg>
          <div>
            <BrandName>溜溜自学</BrandName>
            <BrandSite>ZiXUe.3D66.COM</BrandSite>
          </div>
        </Brand>
      </StatusWrap>
    </Shell>
  );
}
